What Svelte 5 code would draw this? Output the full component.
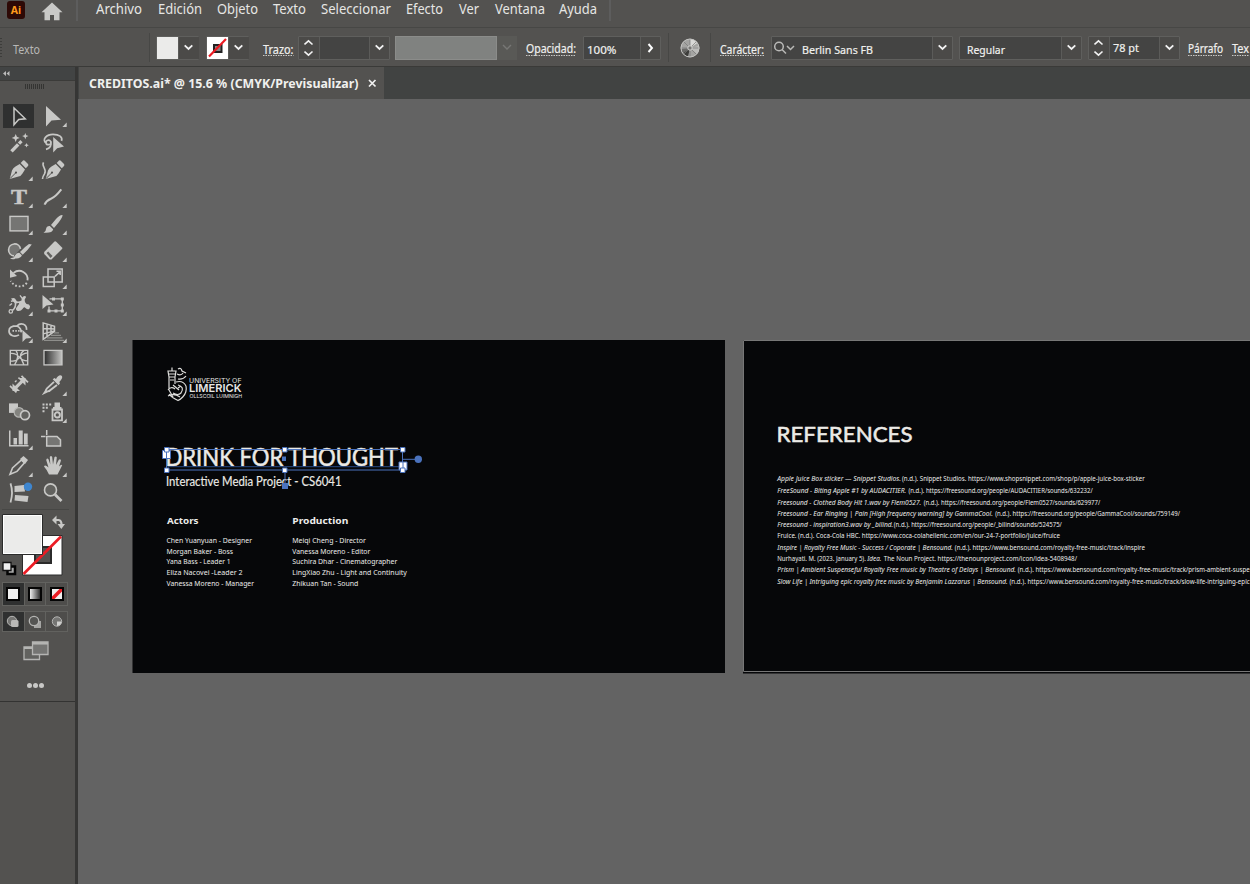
<script>
  const menus = [
    ['Archivo', 46, 0], ['Edición', 44, 16], ['Objeto', 41, 15], ['Texto', 33, 15],
    ['Seleccionar', 70, 15], ['Efecto', 37, 15], ['Ver', 20, 16], ['Ventana', 50, 16], ['Ayuda', 38, 14]
  ];

  const actors = [
    ['Chen Yuanyuan - Designer', 85.5], ['Morgan Baker - Boss', 66.5], ['Yana Bass - Leader 1', 64],
    ['Eliza Nacovei -Leader 2', 76], ['Vanessa Moreno - Manager', 87.5]
  ];
  const production = [
    ['Meiqi Cheng - Director', 73.5], ['Vanessa Moreno - Editor', 78], ['Suchira Dhar - Cinematographer', 105],
    ['LingXiao Zhu - Light and Continuity', 114.5], ['Zhikuan Tan - Sound', 66]
  ];
  const creditY = [543, 553.6, 564.2, 575, 586];

  // each part: x, width, text, italic
  const refs = [
    { y: 481, parts: [[777.3, 123.7, 'Apple Juice Box sticker — Snippet Studios.', true], [902, 242.7, '(n.d.). Snippet Studios. https://www.shopsnippet.com/shop/p/apple-juice-box-sticker']] },
    { y: 493, parts: [[777.3, 129, 'FreeSound - Biting Apple #1 by AUDACITIER.', true], [908.5, 184.2, '(n.d.). https://freesound.org/people/AUDACITIER/sounds/632232/']] },
    { y: 504.7, parts: [[777.3, 144, 'Freesound - Clothed Body Hit 1.wav by Flem0527.', true], [923.7, 176.5, '(n.d.). https://freesound.org/people/Flem0527/sounds/629977/']] },
    { y: 515.5, parts: [[777.3, 215.7, 'Freesound - Ear Ringing | Pain [High frequency warning] by GammaCool.', true], [995.2, 184.8, '(n.d.). https://freesound.org/people/GammaCool/sounds/759149/']] },
    { y: 527, parts: [[777.3, 116, 'Freesound - inspiration3.wav by _bilind.', true], [893.8, 168, '(n.d.). https://freesound.org/people/_bilind/sounds/524575/']] },
    { y: 538.2, parts: [[777.3, 282.7, 'Fruice. (n.d.). Coca-Cola HBC. https://www.coca-colahellenic.com/en/our-24-7-portfolio/juice/fruice']] },
    { y: 549.7, parts: [[777.3, 175.5, 'Inspire | Royalty Free Music - Success / Coporate | Bensound.', true], [954.8, 190.2, '(n.d.). https://www.bensound.com/royalty-free-music/track/inspire']] },
    { y: 561, parts: [[777.3, 88.5, 'Nurhayati. M. (2023. January 5).'], [867.3, 14.2, 'Idea.', true], [883.8, 193.2, 'The Noun Project. https://thenounproject.com/icon/idea-5408948/']] },
    { y: 572.3, parts: [[777.3, 238.7, 'Prism | Ambient Suspenseful Royalty Free music by Theatre of Delays | Bensound.', true], [1017.7, 232, '(n.d.). https://www.bensound.com/royalty-free-music/track/prism-ambient-suspe']] },
    { y: 583.7, parts: [[777.3, 230.5, 'Slow Life | Intriguing epic royalty free music by Benjamin Lazzarus | Bensound.', true], [1009.5, 240.2, '(n.d.). https://www.bensound.com/royalty-free-music/track/slow-life-intriguing-epic']] }
  ];

  const tools = [
    'select', 'direct', 'wand', 'lasso', 'pen', 'curve', 'type', 'line', 'rect', 'brush',
    'shaper', 'eraser', 'rotate', 'scale', 'width', 'free', 'builder', 'persp', 'mesh', 'gradient',
    'measure', 'dropper', 'blend', 'spray', 'graph', 'artboard', 'slice', 'hand', 'puppet', 'zoom'
  ];
  const noFlyout = ['select', 'wand', 'lasso', 'curve', 'mesh', 'gradient', 'measure', 'blend', 'artboard', 'puppet', 'zoom'];
</script>

{#snippet label(text, w, m, size = 11.5, y = 15, cls = '')}
  <svg class="label {cls}" style="width:{w}px;margin-left:{m}px" height="20">
    <text x="0" {y} font-size={size} textLength={w} lengthAdjust="spacingAndGlyphs">{text}</text>
    {#if cls.includes('link')}<path d="M0 17.5H{w}" stroke="#c9c9c7" stroke-dasharray="1.5 1" />{/if}
  </svg>
{/snippet}

{#snippet chev(w = 20)}
  <span class="btn" style="width:{w}px"><svg width="10" height="7"><path d="M.7 1.300 4.500 5l3.800-3.700" fill="none" stroke="#f2f2f2" stroke-width="1.8" /></svg></span>
{/snippet}

{#snippet stepper()}
  <span class="btn step"><svg width="10" height="18"><path d="M.5 5.500 4.500 1.800l4 3.700M.5 12.500l4 3.700 4-3.700" fill="none" stroke="#f2f2f2" stroke-width="1.6" /></svg></span>
{/snippet}

{#snippet icon(n)}
  {#if n === 'select'}
    <path class="o" d="M-5-7.500V9.300L-.3 4 6.300 3.400z" stroke-width="1.500" />
  {:else if n === 'direct'}
    <path class="f" d="M-7-9.300V11L-1.500 5.200 8 4.300z" />
  {:else if n === 'wand'}
    <path class="o" d="M-7.500 9-.8 2" stroke-width="3.400" /><path class="o" d="M0 1.200 2.500-1.200" stroke-width="3.200" />
    <path class="f" d="M-3.300-8.500l1.200 2.800 2.800 1.200-2.800 1.200-1.200 2.800-1.200-2.800-2.800-1.200 2.800-1.200zM6.300-9.500l.9 2.300 2.300.9-2.300.9-.9 2.300-.9-2.300-2.300-.9 2.300-.9zM7.500 .5l.7 1.600 1.600.7-1.600.7-.7 1.600-.7-1.600-1.600-.7 1.600-.7z" />
  {:else if n === 'lasso'}
    <path class="o" d="M-6.500 1C-12-3-6-8 0-8c6 0 10 2.500 8.500 6.500M-6.500 1C-8.500-1.500-4-3.500-2.300-1 -.5 2-6 3.500-7 1M-2.300-1C-1 3-3 6-7 7" stroke-width="1.700" />
    <path class="f" d="M.2-5.500V10L4.200 5.800 11 4z" />
  {:else if n === 'pen' || n === 'curve'}
    <g transform={n === 'curve' ? 'translate(2 0)' : ''}>
      <path class="f" d="M-9.300 9.500-7 1Q-6-1.500-3.500-3L.7-5.500 6 0 3.500 4Q2 6.500-.5 7.200z" />
      <path d="M-9 9.200-3.300 3.500" stroke="#535250" stroke-width="1" /><circle cx="-3" cy="3.200" r="1.100" fill="#535250" />
      <path class="f" d="M1.700-6.500 4-8.800Q5-9.500 6-8.500L9-5.500Q9.800-4.500 9-3.500L6.800-1.200z" />
    </g>
    {#if n === 'curve'}<path class="o" d="M-9.500-7C-12-2.500-5.500-1-8.500 4.500q-2 3-2 5" stroke-width="1.600" />{/if}
  {:else if n === 'type'}
    <text class="glyph" x="-8" y="7.900" textLength="16" lengthAdjust="spacingAndGlyphs">T</text>
  {:else if n === 'line'}
    <path class="o" d="M-8.500 8.300Q-6.500 4-2 2.300T8.300-7" stroke-width="2" />
  {:else if n === 'rect'}
    <rect x="-9" y="-7" width="18" height="14.500" fill="#757573" stroke="#c8c8c6" stroke-width="1.400" />
  {:else if n === 'brush'}
    <path class="f" d="M9.500-8.300Q7-8.700 3-4.500L-2 1.500 1 4.500 6-1.500Q10-6.500 9.500-8.300zM-3.200 2.500.2 5.800Q-.5 10-9.500 9.300-7 8.500-7 5.500-6.500 2.300-3.200 2.500z" />
  {:else if n === 'shaper'}
    <path d="M-5 5.500A6 6 0 1 1 1.500-1.500" fill="#757573" stroke="#c8c8c6" stroke-width="1.600" />
    <path class="f" d="M12.800-6 10-6.500Q6-4 1 1.500L3.700 4.300Q9-.5 12.800-6zM.3 2.300 2.900 4.900Q1.500 8.500-3.500 8-6.500 10-9 7.500-5 8-4 5 -2.500 2 .3 2.300z" />
  {:else if n === 'eraser'}
    <path class="f" d="M-8.800 1.500 1.500-9Q2.500-9.500 3.500-8.500L9.500-2.500 9-1.300-1.500 9Q-3 9.500-4 8.500L-8.800 3.500z" /><path d="M-6.500 2.500-4.800 1-.5 5.500-2.500 7.500z" fill="#62625f" />
  {:else if n === 'rotate'}
    <path class="o" d="M-5.500-4.500C1-9.500 9.500-4.500 8.500 3" stroke-width="1.800" /><path class="f" d="M-9-8v8.300L-2-1.500z" />
    <path class="o" d="M7.800 5.500C4 10.500-4 10.500-8.500 3.500" stroke-width="1.900" stroke-dasharray="1.700 2" />
  {:else if n === 'scale'}
    <path class="o" d="M-5-8.500H9.200V4.500H-5zM-9.700-.5H1.200V9.200H-9.700zM2-1 7-5.700M3.500-6.200H7.200V-2.300" stroke-width="1.500" />
  {:else if n === 'width'}
    <path class="o" d="M-6.500 6Q-3 3-3.500-1T-8-3" stroke-width="1.600" />
    <path class="f" d="M-8-6q4-1.500 5 1.500T2.500-4Q2.500-8 5.500-8.500 8-8 6.500-6.500 5-5 6-2.500T10 0Q12 2 10.500 4 9 6 6.500 3.500 5 2 3.500 4.500T-1.500 6.500Q-4 5-2.500 3T0-.5-3-1Q-5.500-2-8-6z" />
    <circle class="o" cx="-8.200" cy="7" r="1.700" stroke-width="1.300" /><path class="o" d="M-7-1-9.500 1M4-5 1-9" stroke-width="1.300" />
  {:else if n === 'free'}
    <path class="o" d="M-3.500-5.500H9.300V6.500H-4V2" stroke-width="1.300" /><path class="f" d="M-10.500-9.500V4.500L-6.500 1 .5 0zM-1-7h3v3h-3zM7.800-7h3v3h-3zM7.800 5h3v3h-3zM-5.500 5h3v3h-3zM1.500 5h3v3h-3zM7.800-.8h3v3h-3z" />
  {:else if n === 'builder'}
    <path class="o" d="M-2-5.500C2-9.500 8-7 7.500-1.500M0 3.500C-5 6.500-10 3.500-10-.5c0-4 4-5 8-5C0-4.500 2.500-2 2 1" stroke-width="1.700" /><path class="o" d="M-6.500-.5H4" stroke-dasharray="1.500 1.300" stroke-width="1.600" /><path class="f" d="M3.500-1.500V10.500L7 7 12.500 6.500z" />
  {:else if n === 'persp'}
    <path class="o" d="M-9.800-8.500V8L1.500 0V-5zM-6-7.500V5M-2-6.500V3M-9.800-3 1.500-2.500M-9.800 2.500 1.500-.5" stroke-width="1.500" /><path d="M1 1.500H6M-2 4H8M-6 6.500H9.500M-9 9H11" stroke="#8e8e8b" stroke-width="1.300" />
  {:else if n === 'mesh'}
    <path class="o" d="M-8.700-7H8.700V7.500H-8.700zM-8.700-4Q-3-4.500 0-.5t8.700 4M-8.700 3.500Q-3 4.500 0 .5 3-4 8.700-4.500M-3-7Q1-1-4.500 7.500M5-7Q0-3 2 1t3 6.500" stroke-width="1.400" />
  {:else if n === 'gradient'}
    <rect x="-9" y="-7" width="18" height="14.500" fill="url(#tool-grad)" stroke="#c8c8c6" stroke-width="1.300" />
  {:else if n === 'measure'}
    <path class="o" d="M-9 1.500-2.500 8M2.500-8.500 9-2" stroke-width="1.700" /><path class="o" d="M-4 4 4-4" stroke-width="3.200" /><path class="f" d="M-6.500 6.500v-7.500l7.500 7.500zM6.500-6.500v7.500l-7.500-7.500z" /><path class="o" d="M-4-2.500-2.500-4M-.5-6 .5-7" stroke-width="1.400" />
  {:else if n === 'dropper'}
    <path class="o" d="M1-2.500-6 4q-1 1-1.500 3l-1 1.500 3-1.500q2 0 3-1.500L4 .5" stroke-width="1.900" /><path class="f" d="M-.3-5.200 1.500-6.500 3-5.500Q5.500-10 8.300-9 10.300-7.500 8-4.500L6.300-2.500 7-1 5.500.8z" />
  {:else if n === 'blend'}
    <path class="f" d="M-10-8H-1V1.500H-10z" /><circle cx="0" cy="1" r="4.800" fill="#83837f" stroke="#b5b5b2" stroke-width="1.200" /><circle cx="6" cy="3.800" r="4.500" fill="#62625f" stroke="#c8c8c6" stroke-width="1.700" />
  {:else if n === 'spray'}
    <path class="o" d="M-.5-2H9V9H-.5z" stroke-width="1.800" /><path class="f" d="M1.500-9H7V-4.500H1.500zM0-4.500H8.500V-1H0z" /><circle class="o" cx="4.300" cy="3.500" r="2.600" stroke-width="1.900" /><path class="f" d="M-10.500-8h2v2h-2zM-7.200-8h2v2h-2zM-3.800-8h2v2h-2zM-10.500-4.700h2v2h-2zM-7.200-4.700h2v2h-2zM-10.500-1.200h2v2h-2z" />
  {:else if n === 'graph'}
    <path class="f" d="M-10-8h1.500V6.500H9.500V8H-10zM-5.500-.5h3.500V6h-3.500zM-.3-8h4V6h-4zM5-5h3.700V6H5z" />
  {:else if n === 'artboard'}
    <path d="M-6.300-2H4L7.500 1.500V7.500H-6.300z" fill="#757573" stroke="#c8c8c6" stroke-width="1.500" /><path class="o" d="M-12-2H-7.500M-6.300-8.500V-3.500" stroke-width="1.500" />
  {:else if n === 'slice'}
    <path class="o" d="M-9 8.800-6.500 2.500 2.500-5.500 5.500-2.500-2 6z" stroke-width="1.600" /><path class="f" d="M1-6.500 4.500-9.300 9-5.500 6-1.500z" />
  {:else if n === 'hand'}
    <path class="f" d="M-4 9Q-5.500 5-9 1-8-1-4.500 2L-6.800-5.500Q-6-7.700-4.500-6.200L-2.700-1-3.200-8.500Q-2-10.200-.8-8.500L0-1 1.500-8.300Q3-9.800 3.800-7.800L3-.5 5.800-5.700Q7.500-6.700 8-5L6 1Q8.500-1.500 9.200-.2 7.500 3.500 4.500 9z" />
  {:else if n === 'puppet'}
    <path class="o" d="M-8.500-9Q-5.500 0-8.500 10" stroke-width="1.800" /><path class="f" d="M-4.500-6.500 5-7.500 6-1-4.500-.5zM-4 2.500 9.500 3.500 8.500 9.500-4.500 8z" /><circle cx="9" cy="-5.700" r="4.200" fill="#3e86cf" />
  {:else if n === 'zoom'}
    <circle cx="-2.500" cy="-2.500" r="6" fill="#62625f" stroke="#c8c8c6" stroke-width="1.600" /><path class="o" d="M2 2.200 8.500 8.500" stroke-width="2.800" />
  {/if}
  {#if !noFlyout.includes(n)}<path class="f" d="M13.700 7.200v4.300h-4.300z" />{/if}
{/snippet}

<div class="app">
  <header class="menubar">
    <span class="logo">Ai</span>
    <svg class="home" width="22" height="19" viewBox="0 0 22 19"><path d="M11 .5 21.500 10.200H18.500V18.200H13V13H9V18.200H3.500V10.200H.500z" fill="#c9c9c7" /></svg>
    <i class="menusep"></i>
    <nav>
      {#each menus as [t, w, m]}{@render label(t, w, m, 13.5, 14, 'menu')}{/each}
    </nav>
    <i class="menusep end"></i>
  </header>

  <div class="control">
    <i class="grip"></i>
    {@render label('Texto', 27, 10.5, 12, 15.5, 'muted')}
    <i class="vsep" style="margin-left:109px"></i>
    <div class="field" style="width:43px;margin-left:6px"><b class="sw"></b>{@render chev(21)}</div>
    <div class="field" style="width:43px;margin-left:7px">
      <b class="sw white"><svg width="21" height="22"><rect x="7" y="8" width="7.500" height="7" fill="#888" stroke="#222" stroke-width="2" /><path d="M2 19.500 19 2" stroke="#ec1c24" stroke-width="2.200" /></svg></b>{@render chev(21)}
    </div>
    {@render label('Trazo:', 30.5, 14, 12, 15.5, 'link')}
    <div class="field" style="width:92px;margin-left:5px">{@render stepper()}<span class="value"></span>{@render chev()}</div>
    <div class="profile"><b></b><span><svg width="10" height="7"><path d="M1 1l4 4 4-4" fill="none" stroke="#777775" stroke-width="1.400" /></svg></span></div>
    {@render label('Opacidad:', 50, 9, 12, 14.5, 'link')}
    <div class="field" style="width:78px;margin-left:7px">
      <span class="value">{@render label('100%', 29.5, 3, 11.5, 15.500)}</span>
      <span class="btn" style="width:20px"><svg width="8" height="10"><path d="M1.500 1l3.500 4L1.500 9" fill="none" stroke="#fff" stroke-width="1.900" /></svg></span>
    </div>
    <i class="vsep" style="margin-left:7px"></i>
    <svg class="wheel" width="20" height="20" viewBox="-10 -10 20 20">
      <circle r="9.300" fill="#a4a4a2" /><path d="M0 0 0-9A9 9 0 0 1 7.500-5z" fill="#d9d9d7" /><path d="M0 0 9-2A9 9 0 0 1 7 6z" fill="#bcbcba" /><path d="M0 0-7.500 5A9 9 0 0 0-2 8.800z" fill="#3d3d3b" /><path d="M0 0-9 1A9 9 0 0 0-7 5.500z" fill="#6a6a68" />
      <path d="M0-9V9M-9 0H9M-6.500-6.500 6.500 6.500M6.500-6.500-6.500 6.500" stroke="#777775" stroke-width=".7" /><circle r="2.200" fill="#777775" stroke="#d5d5d3" /><circle r="9" fill="none" stroke="#c2c2c0" />
    </svg>
    <i class="vsep" style="margin-left:10px"></i>
    {@render label('Carácter:', 44, 9, 12, 15.5, 'link')}
    <div class="field" style="width:182px;margin-left:7px">
      <span class="value">
        <svg width="24" height="16"><circle cx="7" cy="6.500" r="4.300" fill="none" stroke="#b9b9b7" stroke-width="1.500" /><path d="M10 9.500 14 13.500M15 6l3.500 3.500L22 6" fill="none" stroke="#b9b9b7" stroke-width="1.500" /></svg>
        {@render label('Berlin Sans FB', 71, 5.5, 11.5, 15.500)}
      </span>{@render chev()}
    </div>
    <div class="field" style="width:123px;margin-left:6px"><span class="value">{@render label('Regular', 38, 6.500, 11.5, 15.500)}</span>{@render chev()}</div>
    <div class="field" style="width:92px;margin-left:6px">{@render stepper()}<span class="value">{@render label('78 pt', 26, 3, 11.5, 14)}</span>{@render chev()}</div>
    {@render label('Párrafo', 35, 8, 12, 14.5, 'link')}
    {@render label('Tex', 17, 9, 12, 14.5, 'link')}
  </div>

  <main>
    <aside>
      <div class="collapse"><svg width="9" height="7"><path d="M4 1v5L1 3.500zM7.500 1v5l-3-2.500z" fill="#bbb" /></svg></div>
      <div class="draggrip"></div>
      <div class="tools">
        {#each tools as n, i}
          <div class="tool" class:active={i === 0}><svg width="34" height="26.900" viewBox="-17 -13.400 34 26.900">{@render icon(n)}</svg></div>
        {/each}
      </div>
      <svg class="swatches" width="70" height="70" viewBox="0 508 70 70">
        <path d="M2 509.500H69" stroke="#474745" />
        <path d="M22.500 535.500H62V575H22.500z" fill="#fff" stroke="#2c2c2c" />
        <path d="M35 547H51V563H35z" fill="#535250" stroke="#2b2b2b" stroke-width="2" />
        <path d="M23.500 574 61 536.500" stroke="#ec1c24" stroke-width="2.600" />
        <path d="M2.500 514.500H42.500V554.500H2.500z" fill="#fff" stroke="#2b2b2b" /><path d="M4 516H41V553H4z" fill="#ebebea" />
        <path d="M55 520H58.500Q61.500 520.500 61.500 524.500V526" fill="none" stroke="#c8c8c6" stroke-width="2.200" /><path d="M56.500 515.500V524.500L52 520zM57.500 524H65L61.300 529z" fill="#c8c8c6" />
        <path d="M7.500 566.500H15V574H7.500z" fill="#aaa" stroke="#050505" stroke-width="2.500" /><path d="M3 562.500H11V570.500H3z" fill="#f0f0f0" stroke="#111" stroke-width="1.300" />
      </svg>
      <div class="modes">
        <span class="on"><b></b></span><span><b class="grad"></b></span>
        <span><b class="none"><svg width="10" height="10"><path d="M0 10 10 0" stroke="#ec1c24" stroke-width="3.500" /></svg></b></span>
      </div>
      <div class="modes draw">
        <span class="on"><svg width="14" height="14"><circle cx="6" cy="6" r="4.700" fill="#757573" stroke="#b5b5b3" /><rect x="5" y="5" width="7.500" height="7" rx="1.500" fill="#b9b9b7" /></svg></span>
        <span><svg width="14" height="14"><rect x="6" y="6" width="7" height="7" fill="#a5a5a3" /><circle cx="6" cy="6" r="4.700" fill="#555553" stroke="#b5b5b3" stroke-width="1.300" /></svg></span>
        <span><svg width="14" height="14"><circle cx="7" cy="6.500" r="4.700" fill="#757573" stroke="#b5b5b3" /><path d="M7 6.500h4.500Q11 10.500 7 11z" fill="#d0d0ce" /></svg></span>
      </div>
      <svg class="screen" width="26" height="20"><path d="M1 6H16.500V18.500H1z" fill="#62625f" stroke="#b5b5b3" stroke-width="1.300" /><path d="M1 7H16" stroke="#b5b5b3" stroke-width="2" /><path d="M9.500 1H25V13.500H9.500z" fill="#757573" stroke="#b5b5b3" stroke-width="1.300" /><path d="M9.500 2.300H25" stroke="#b5b5b3" stroke-width="2.500" /></svg>
      <div class="dots"><i></i><i></i><i></i></div>
      <div class="asideend"></div>
    </aside>

    <section>
      <div class="tabs"><div class="tab">{@render label('CREDITOS.ai* @ 15.6 % (CMYK/Previsualizar)', 269.5, 9.500, 11.5, 14.5, 'bold')}
        <svg class="close" width="9" height="9"><path d="M1 1l6.500 6.500M7.500 1 1 7.500" stroke="#f0f0f0" stroke-width="1.700" /></svg></div></div>
      <svg class="canvas" width="1172" height="785" viewBox="78 99 1172 785">
        <defs>
          <linearGradient id="tool-grad"><stop offset="0" stop-color="#2d2d2d" /><stop offset="1" stop-color="#c4c4c2" /></linearGradient>
        </defs>
        <rect x="132.500" y="340" width="592.500" height="333" fill="#060709" />
        <rect x="743" y="340" width="520" height="333.500" fill="#060709" />
        <path d="M1250 340.500H743.500V671.500H1250" fill="none" stroke="#777" />

        <g fill="none" stroke="#dededc" stroke-width="1.200">
          <path d="M168 371H176L175 377H169zM172 371V367.500M169 374H175M169 377V390M175 377V384M170 380H174M168 390Q171 386 175 389M178 369Q181 367 182 371L186 373M177 374Q181 376 183 373M178 379Q183 380 186 376M176 382Q183 380 186 386M186 386C188 396 178 400.500 178 400.500Q172 398 169 394M178 385Q185 387 181 393 178 396 173 393M168 396Q174 393 180 397M178 388 181 386M173 385 179 390M169 390 173 397" />
        </g>
        <g class="brand">
          <text x="189" y="382.700" font-size="6.400" textLength="52.500" lengthAdjust="spacingAndGlyphs">UNIVERSITY OF</text>
          <text x="189" y="392" font-size="11" font-weight="600" textLength="52.500" lengthAdjust="spacingAndGlyphs">LIMERICK</text>
          <text x="189.500" y="398" font-size="5.300" textLength="52.500" lengthAdjust="spacingAndGlyphs">OLLSCOIL LUIMNIGH</text>
        </g>

        <g class="display">
          <text x="165.500" y="466.300" font-size="25" textLength="232.500" lengthAdjust="spacingAndGlyphs">DRINK FOR THOUGHT</text>
          <text class="sub" x="166" y="486" font-size="12.500" textLength="175.500" lengthAdjust="spacingAndGlyphs">Interactive Media Project - CS6041</text>
          <text x="776.500" y="442" font-size="22" textLength="136" lengthAdjust="spacingAndGlyphs">REFERENCES</text>
        </g>

        <g class="copy">
          <text x="167" y="524.300" font-size="9.300" font-weight="700" textLength="31.500" lengthAdjust="spacingAndGlyphs">Actors</text>
          <text x="292.300" y="524.300" font-size="9.300" font-weight="700" textLength="56" lengthAdjust="spacingAndGlyphs">Production</text>
          {#each actors as [t, w], i}<text x="166.500" y={creditY[i]} textLength={w} lengthAdjust="spacingAndGlyphs">{t}</text>{/each}
          {#each production as [t, w], i}<text x="292.300" y={creditY[i]} textLength={w} lengthAdjust="spacingAndGlyphs">{t}</text>{/each}
          {#each refs as r}
            {#each r.parts as [x, w, t, it]}
              <text {x} y={r.y} class:it textLength={w} lengthAdjust="spacingAndGlyphs">{t}</text>
            {/each}
          {/each}
        </g>

        <g stroke="#4a72bd" fill="none">
          <path d="M166.500 449.500H402.500V470H166.500zM402.500 459.300H416M285 470V484" />
          <path d="M168 466.700H400" stroke="#294a86" />
          <g fill="#fff">
            <path d="M162.500 450.500H170.500V458.500H162.500zM399 462H407V470H399z" />
            <path d="M166.500 450V458M403 462V470" />
            <path d="M164.500 447.500h4.500v4.500h-4.500zM282.500 447.500h4.500v4.500h-4.500zM400.500 447.500h4.500v4.500h-4.500zM164.500 468h4.500v4.500h-4.500zM282.500 468h4.500v4.500h-4.500zM400.500 468h4.500v4.500h-4.500z" />
          </g>
        </g>
        <path d="M282 456.500h4v4.500h-4zM282 483h6v6h-6z" fill="#4a72bd" /><circle cx="418.300" cy="459.300" r="3.700" fill="#4a72bd" />
      </svg>
    </section>
  </main>
</div>

<style>
  :global(body) { background: #535250; overflow: hidden; }
  .app { width: 1250px; height: 884px; overflow: hidden; display: flex; flex-direction: column; background: #535250; font-family: "Noto Sans", sans-serif; }
  svg { display: block; flex: none; }
  i { flex: none; }
  .menubar { height: 27px; flex: none; display: flex; align-items: flex-start; border-bottom: 1px solid #474745; }
  .logo { width: 18px; height: 18px; margin: 1px 0 0 7px; border-radius: 3px; background: #2d0906; color: #ff9a1a; font: 700 10.5px/18px "Noto Sans", sans-serif; text-align: center; flex: none; }
  .home { margin: 2px 0 0 16px; }
  .menusep { width: 2px; height: 21px; background: #5d5d5d; margin-left: 13px; }
  .menusep.end { margin-left: 12px; }
  nav { display: flex; margin-left: 18px; }
  .label { overflow: visible; fill: #f0f0ee; }
  .menu { fill: #e6e6e4; }
  .muted { fill: #b8b8b6; }
  .bold { font-weight: 700; }
  .control { height: 39px; flex: none; display: flex; align-items: center; box-sizing: border-box; border-bottom: 1px solid #3a3a38; padding-top: 1px; }
  .control .label:not(.muted) text { stroke: #f0f0ee; stroke-width: .2; }
  .grip { width: 2px; height: 20px; background: repeating-linear-gradient(#3d3d3b 0 1px, #535250 1px 3px); }
  .vsep { width: 1px; height: 29px; background: #474745; }
  .field { height: 24px; flex: none; box-sizing: border-box; border: 1px solid #5f5f5d; display: flex; border-radius: 1px; }
  .sw { width: 21px; flex: none; background: #ebebea; }
  .white { background: #fff; }
  .value { flex: 1; background: #444443; display: flex; align-items: center; }
  .btn { flex: none; background: #4b4a48; display: flex; align-items: center; justify-content: center; box-sizing: border-box; border-left: 1px solid #5b5b59; }
  .step { width: 21px; border-left: 0; border-right: 1px solid #5b5b59; }
  .profile { width: 122px; height: 24px; margin-left: 5px; display: flex; flex: none; }
  .profile b { width: 102px; background: #808280; box-sizing: border-box; border: 1px solid #8b8c8a; }
  .profile span { flex: 1; background: #595956; display: flex; align-items: center; justify-content: center; }
  .wheel { margin-left: 11px; }
  main { flex: 1; display: flex; min-height: 0; }
  aside { width: 75px; flex: none; border-right: 3px solid #363635; box-sizing: content-box; display: flex; flex-direction: column; align-items: flex-start; }
  .collapse { width: 75px; height: 14px; background: #424444; border-bottom: 1px solid #3b3b39; display: flex; align-items: center; padding-left: 2px; box-sizing: border-box; }
  .draggrip { width: 20px; height: 5px; margin: 3px 0 0 25px; background: repeating-linear-gradient(90deg, #343432 0 1px, #535250 1px 2px, #343432 2px 3px, #535250 3px 4px); }
  .tools { margin: 13.400px 0 0 1.600px; display: grid; grid-template-columns: 34px 34px; grid-auto-rows: 26.9px; }
  .tool.active { background: linear-gradient(#2f3030, #2f3030) center / 31px 24px no-repeat; }
  .f { fill: #c8c8c6; }
  .o { fill: none; stroke: #c8c8c6; }
  .glyph { font: 700 22px "Liberation Serif", serif; fill: #c8c8c6; stroke: #c8c8c6; stroke-width: .5; }
  .swatches { margin-top: 2.600px; }
  .modes { width: 66px; height: 24px; margin: 4px 0 0 2px; display: flex; box-sizing: border-box; border: 1px solid #62625f; }
  .modes span { flex: 1; display: flex; align-items: center; justify-content: center; border-right: 1px solid #62625f; background: #4e4d4b; }
  .modes span:last-child { border: 0; }
  .modes .on { background: #2f3030; }
  .modes b { width: 10px; height: 10px; border: 2px solid #050505; background: #f0f0f0; }
  .modes .grad { background: linear-gradient(90deg, #eee, #333); }
  .draw { height: 21px; margin-top: 5px; }
  .screen { margin: 9px 0 0 23px; }
  .dots { display: flex; gap: 1px; margin: 22px 0 0 27px; }
  .dots i { width: 5px; height: 5px; border-radius: 50%; background: #c8c8c6; }
  .asideend { width: 75px; height: 1px; margin-top: 13px; background: #333332; }
  section { flex: 1; min-width: 0; display: flex; flex-direction: column; }
  .tabs { height: 32px; flex: none; background: #414342; padding-left: 1px; display: flex; box-sizing: border-box; }
  .tab { width: 305px; background: #535250; display: flex; align-items: center; }
  .close { margin-left: 10px; }
  .canvas { background: #636363; }
  .display { font-family: Lato, sans-serif; fill: #ebeae6; stroke: #ebeae6; stroke-width: .55; }
  .sub { stroke-width: .15; }
  .brand { font-family: Inter, sans-serif; fill: #e8e8e6; }
  .copy { font-family: "Noto Sans", sans-serif; font-size: 6.7px; fill: #ececea; }
  .it { font-style: italic; }
</style>
